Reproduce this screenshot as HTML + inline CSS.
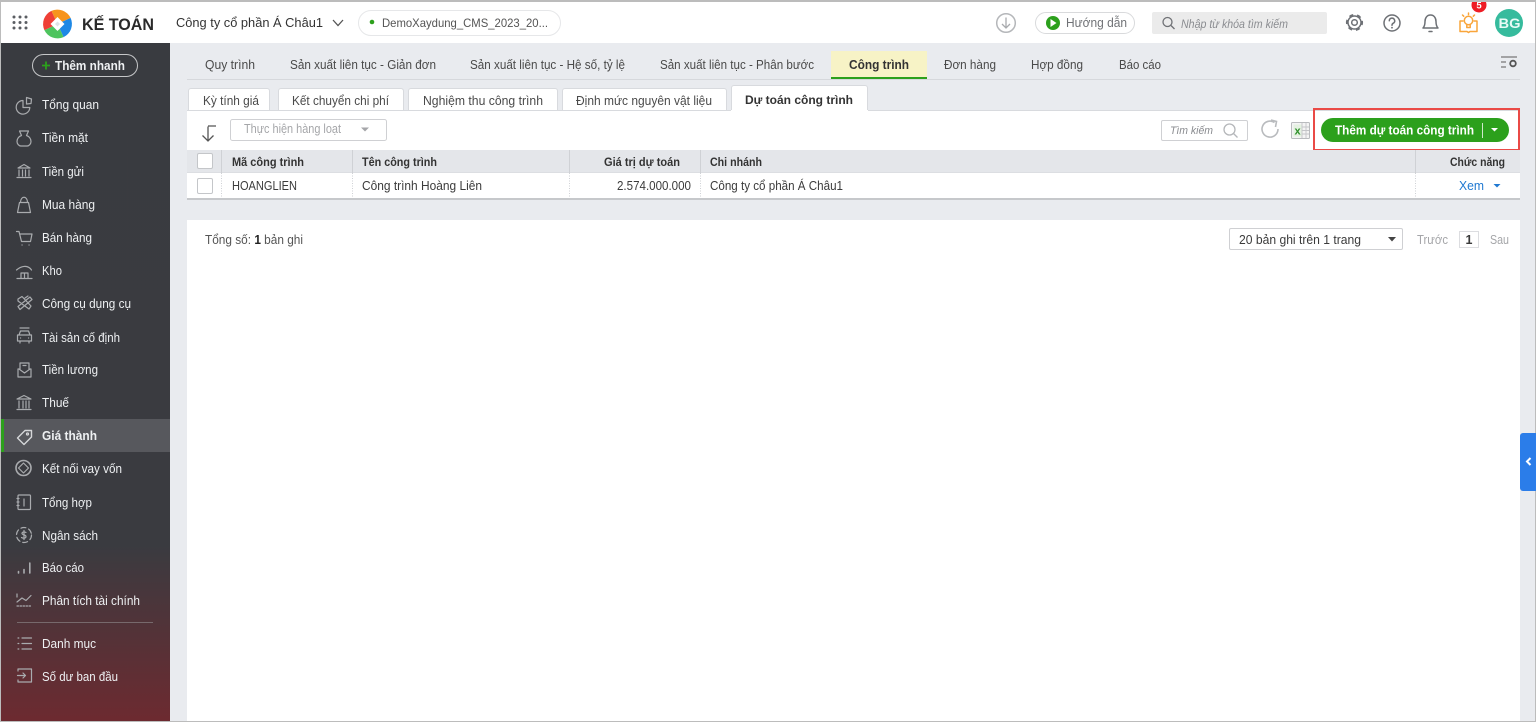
<!DOCTYPE html>
<html lang="vi"><head><meta charset="utf-8"><title>Kế toán</title>
<style>
html,body{margin:0;padding:0;width:1536px;height:722px;overflow:hidden;background:#e9ebef}
svg{display:block;font-family:"Liberation Sans","DejaVu Sans",sans-serif;filter:blur(.35px)}
text{font-size:12.5px;fill:#3b3b3b}
.s text{fill:#eef0f2;font-size:12.5px}
.b{font-weight:700}
.t text{fill:#4a4a4a}
.i{fill:none;stroke:#a9abae;stroke-width:1.2;stroke-linecap:round;stroke-linejoin:round}
.g{fill:none;stroke:#6d7075;stroke-width:1.5;stroke-linecap:round;stroke-linejoin:round}
</style></head><body>
<svg xmlns="http://www.w3.org/2000/svg" width="1536" height="722" viewBox="0 0 1536 722">
<defs><linearGradient id="sb" x1="0" y1="0" x2="0" y2="1"><stop offset="0" stop-color="#393b40"/><stop offset=".74" stop-color="#3a3b40"/><stop offset="1" stop-color="#6d2a30"/></linearGradient></defs>
<rect width="1536" height="722" fill="#e9ebef"/>
<rect y="2" width="1536" height="41" fill="#fff"/>
<rect x="1" y="43" width="169" height="679" fill="url(#sb)"/>

<!-- app grid -->
<g fill="#5b5e63"><circle cx="14" cy="17" r="1.5"/><circle cx="20" cy="17" r="1.5"/><circle cx="26" cy="17" r="1.5"/><circle cx="14" cy="22.500" r="1.5"/><circle cx="20" cy="22.500" r="1.5"/><circle cx="26" cy="22.500" r="1.5"/><circle cx="14" cy="28" r="1.5"/><circle cx="20" cy="28" r="1.5"/><circle cx="26" cy="28" r="1.5"/></g>
<!-- logo -->
<path d="M57.500 24L51.400 10.900A14.500 14.500 0 0 1 70.600 17.900Z" fill="#f7941d"/>
<path d="M57.500 24L70.600 17.900A14.500 14.500 0 0 1 63.600 37.100Z" fill="#1e88e5"/>
<path d="M57.500 24L63.600 37.100A14.500 14.500 0 0 1 44.400 30.100Z" fill="#4ec45e"/>
<path d="M57.500 24L44.400 30.100A14.500 14.500 0 0 1 51.400 10.900Z" fill="#ef3f36"/>
<path d="M57.500 17L64.500 24L57.500 31L50.500 24Z" fill="#fff"/>
<path d="M57.500 21.500L60 24L57.500 26.500L55 24Z" fill="#dfe3e6"/>
<text x="82" y="30" textLength="72" lengthAdjust="spacingAndGlyphs" class="b" style="font-size:17px;fill:#2a2a2a">KẾ TOÁN</text>
<text x="176" y="27" textLength="147" lengthAdjust="spacingAndGlyphs" style="font-size:13px;fill:#333">Công ty cổ phần Á Châu1</text>
<path d="M333 20l5 5.500 5-5.500" fill="none" stroke="#555" stroke-width="1.300"/>
<rect x="358.500" y="10.500" width="202" height="25" rx="12.500" fill="#fff" stroke="#e6e7e9"/>
<circle cx="372" cy="22" r="2.300" fill="#2ca01c"/>
<text x="382" y="27" textLength="166" lengthAdjust="spacingAndGlyphs" style="font-size:12px;fill:#555">DemoXaydung_CMS_2023_20...</text>

<!-- right header -->
<circle cx="1006" cy="23" r="9.300" fill="none" stroke="#b5b7ba" stroke-width="1.500"/>
<path d="M1006 17.500v10M1002 24l4 4 4-4" fill="none" stroke="#a9abae" stroke-width="1.300"/>
<rect x="1035.500" y="12.500" width="99" height="21" rx="10.500" fill="#fff" stroke="#d9dadc"/>
<circle cx="1053" cy="23" r="7" fill="#2ca01c"/><path d="M1050.500 19v8l6-4z" fill="#fff"/>
<text x="1066" y="27" textLength="61" lengthAdjust="spacingAndGlyphs" style="fill:#707276;font-size:12.500px">Hướng dẫn</text>
<rect x="1152" y="12" width="175" height="22" rx="2" fill="#ebebeb"/>
<circle cx="1167.500" cy="22" r="4.500" fill="none" stroke="#6f7175" stroke-width="1.300"/><path d="M1171 25.500l3.500 3.500" stroke="#6f7175" stroke-width="1.300"/>
<text x="1181" y="28" textLength="107" lengthAdjust="spacingAndGlyphs" style="font-size:11.500px;font-style:italic;fill:#8a8c90">Nhập từ khóa tìm kiếm</text>
<circle cx="1354.500" cy="22.500" r="6.500" fill="none" stroke="#6d7075" stroke-width="1.500"/>
<circle cx="1354.500" cy="22.500" r="7.800" fill="none" stroke="#6d7075" stroke-width="1.600" stroke-dasharray="4.200 3.970" transform="rotate(-12 1354.500 22.500)"/>
<circle cx="1354.500" cy="22.500" r="2.800" class="g"/>
<circle cx="1392" cy="23" r="8" class="g"/>
<path class="g" d="M1389.300 20.800a2.700 2.700 0 1 1 4 2.400c-.9.500-1.300 1-1.300 2"/><circle cx="1392" cy="27.700" r=".9" fill="#6d7075"/>
<path class="g" d="M1423 28c1.500-1.500 2-3 2-6.500 0-3.500 2-6.500 5.500-6.500s5.500 3 5.500 6.500c0 3.500.5 5 2 6.500z"/><path class="g" d="M1429 31.500h3"/>
<g fill="none" stroke="#f9a53a" stroke-width="1.500" stroke-linejoin="round" stroke-linecap="round">
<path d="M1460 21h3M1477 21h-3M1460 21v10.500h7l1.500 1 1.500-1h7V21"/>
<circle cx="1468.500" cy="20.500" r="4.200"/><path d="M1466.800 24.500v3h3.400v-3"/>
<path d="M1468.500 13v1.500M1462.500 15l1.200 1.200M1474.500 15l-1.200 1.200"/></g>
<circle cx="1479" cy="5" r="7.500" fill="#ee1c25"/>
<text x="1479" y="8.500" text-anchor="middle" class="b" style="font-size:9.500px;fill:#fff">5</text>
<circle cx="1509" cy="23" r="14" fill="#36bb9d"/>
<text x="1498.500" y="28" textLength="22" lengthAdjust="spacingAndGlyphs" class="b" style="font-size:13.500px;fill:#e9fbf6">BG</text>

<!-- sidebar -->
<rect x="32.500" y="54.500" width="105" height="22" rx="11" fill="none" stroke="#c6c7c9"/>
<path d="M42 65.500h8M46 61.500v8" stroke="#2ca01c" stroke-width="1.800"/>
<rect x="1" y="419" width="169" height="33" fill="#57585d"/><rect x="1" y="419" width="3" height="33" fill="#2ca01c"/>
<rect x="17" y="622" width="136" height="1" fill="#77696c"/>
<g class="s">
<text x="55" y="70" textLength="70" lengthAdjust="spacingAndGlyphs" style="font-weight:700;font-size:12.500px">Thêm nhanh</text>
<text x="42" y="109" textLength="57" lengthAdjust="spacingAndGlyphs">Tổng quan</text>
<text x="42" y="142" textLength="46" lengthAdjust="spacingAndGlyphs">Tiền mặt</text>
<text x="42" y="176" textLength="42" lengthAdjust="spacingAndGlyphs">Tiền gửi</text>
<text x="42" y="209" textLength="53" lengthAdjust="spacingAndGlyphs">Mua hàng</text>
<text x="42" y="242" textLength="50" lengthAdjust="spacingAndGlyphs">Bán hàng</text>
<text x="42" y="275" textLength="20" lengthAdjust="spacingAndGlyphs">Kho</text>
<text x="42" y="308" textLength="89" lengthAdjust="spacingAndGlyphs">Công cụ dụng cụ</text>
<text x="42" y="342" textLength="78" lengthAdjust="spacingAndGlyphs">Tài sản cố định</text>
<text x="42" y="374" textLength="56" lengthAdjust="spacingAndGlyphs">Tiền lương</text>
<text x="42" y="407" textLength="27" lengthAdjust="spacingAndGlyphs">Thuế</text>
<text x="42" y="440" textLength="55" lengthAdjust="spacingAndGlyphs" class="b">Giá thành</text>
<text x="42" y="473" textLength="80" lengthAdjust="spacingAndGlyphs">Kết nối vay vốn</text>
<text x="42" y="507" textLength="50" lengthAdjust="spacingAndGlyphs">Tổng hợp</text>
<text x="42" y="540" textLength="56" lengthAdjust="spacingAndGlyphs">Ngân sách</text>
<text x="42" y="572" textLength="42" lengthAdjust="spacingAndGlyphs">Báo cáo</text>
<text x="42" y="605" textLength="98" lengthAdjust="spacingAndGlyphs">Phân tích tài chính</text>
<text x="42" y="648" textLength="54" lengthAdjust="spacingAndGlyphs">Danh mục</text>
<text x="42" y="681" textLength="76" lengthAdjust="spacingAndGlyphs">Số dư ban đầu</text>
</g>
<!-- sidebar icons -->
<g class="i">
<path d="M23 100.500a6.800 6.800 0 1 0 6.800 7h-6.800z"/><path d="M26.500 97.500l5 1.500-.5 4.500-4.500.5z"/>
<path d="M19.500 131h9l-2 4.500c3 1 4.500 3.500 4.500 6 0 2.500-2 4.500-4 4.500h-6c-2 0-4-2-4-4.500 0-2.500 1.500-5 4.500-6z"/>
<path d="M24 164.500l-6 3.500h12zM19 170v6M22.500 170v6M25.500 170v6M29 170v6M17 177.500h14"/>
<path d="M17.500 212.500l2-10h9l2 10zM20.500 202.500c0-7 7-7 7 0"/>
<path d="M16.500 231.500h2.500l2.500 10h9l1.500-7.500H20M22 245h.1M29 245h.1"/>
<path d="M16.500 270c4-3.500 11-6 15 0M17 278.500h15M21 278v-5h7v5M24.500 273v5"/>
<path d="M18 299l4-2.500 9 9.500-2 3-11-8zM30 297l2 2.500-12 10-2-3zM25 298l3-2"/>
<path d="M20 328h9M19 335l1.500-4h8l1.500 4M17.500 335h14v6h-14zM20 341v2M29 341v2M20.500 338h.1M28.500 338h.1"/>
<path d="M20 369v-6h9v6M18 369h1l5.500 4 5.500-4h1v8H18zM23 365.500h3"/>
<path d="M24 395.500l-7 3.500h14zM19 401v7M23 401v7M26 401v7M29 401v7M17 409.500h14"/>
<path d="M17.500 438l7.500-7.500h6.500v6.500l-7.500 7.500z" stroke-width="1.400" stroke="#d6d7d9"/><circle cx="27.500" cy="434" r="1" stroke="#d6d7d9"/>
<circle cx="23.500" cy="468" r="7.500" stroke-width="1.600"/><path d="M23.500 463l5 5-5 5-5-5z"/>
<rect x="18" y="495" width="12.500" height="14.500" rx="1"/><path d="M17 498.500h2M17 502h2M17 505.500h2M24 499v7"/>
<circle cx="24" cy="535" r="7.500" stroke-dasharray="5 3"/><path d="M26 532.500c-2-1-4-.5-4 1s4 1 4 3-3 2-4.500 1M24 530.500v9"/>
<path d="M18.500 573v-1.500M24 573v-3.500M29.800 573v-10" stroke-width="1.600"/>
<path d="M17 606h15" stroke-dasharray="1.500 1.500"/><path d="M17 602l5-4 4 2.500 5-5M17 594v3"/>
<path d="M18 638h.8M18 643.500h.8M18 649h.8M22 638h9.500M22 643.500h9.500M22 649h9.500"/>
<path d="M18 671v-2h13.500v13H18v-2M17.500 675.500h8M23 673l2.500 2.500-2.500 2.500"/>
</g>

<!-- first-level tabs -->
<rect x="831" y="51" width="96" height="28" fill="#f7f3c6"/><rect x="831" y="77" width="96" height="2" fill="#2ca01c"/>
<rect x="187" y="79" width="1333" height="1" fill="#d6d8dc"/>
<g class="t">
<text x="205" y="69" textLength="50" lengthAdjust="spacingAndGlyphs">Quy trình</text>
<text x="290" y="69" textLength="146" lengthAdjust="spacingAndGlyphs">Sản xuất liên tục - Giản đơn</text>
<text x="470" y="69" textLength="155" lengthAdjust="spacingAndGlyphs">Sản xuất liên tục - Hệ số, tỷ lệ</text>
<text x="660" y="69" textLength="154" lengthAdjust="spacingAndGlyphs">Sản xuất liên tục - Phân bước</text>
<text x="849" y="69" textLength="60" lengthAdjust="spacingAndGlyphs" class="b" style="fill:#333">Công trình</text>
<text x="944" y="69" textLength="52" lengthAdjust="spacingAndGlyphs">Đơn hàng</text>
<text x="1031" y="69" textLength="52" lengthAdjust="spacingAndGlyphs">Hợp đồng</text>
<text x="1119" y="69" textLength="42" lengthAdjust="spacingAndGlyphs">Báo cáo</text>
</g>
<path d="M1501 57h16M1501 62h5M1501 67h5" stroke="#777" stroke-width="1.200" fill="none"/>
<circle cx="1513" cy="63.500" r="2.800" fill="none" stroke="#555" stroke-width="1.800"/>

<!-- second-level tabs -->
<g fill="#fff" stroke="#d8dade">
<path d="M188.500 111V91a2.500 2.500 0 0 1 2.500-2.500h76a2.500 2.500 0 0 1 2.500 2.500v20z"/>
<path d="M278.500 111V91a2.500 2.500 0 0 1 2.500-2.500h120a2.500 2.500 0 0 1 2.500 2.500v20z"/>
<path d="M408.500 111V91a2.500 2.500 0 0 1 2.500-2.500h144a2.500 2.500 0 0 1 2.500 2.500v20z"/>
<path d="M562.500 111V91a2.500 2.500 0 0 1 2.500-2.500h159a2.500 2.500 0 0 1 2.500 2.500v20z"/>
<path d="M731.500 111V88a2.500 2.500 0 0 1 2.500-2.500h131a2.500 2.500 0 0 1 2.500 2.500v23z"/>
</g>
<rect x="187" y="110" width="1333" height="40" fill="#fff"/>
<rect x="187" y="110" width="544" height="1" fill="#d8dade"/><rect x="868" y="110" width="652" height="1" fill="#d8dade"/>
<g class="t">
<text x="203" y="105" textLength="56" lengthAdjust="spacingAndGlyphs">Kỳ tính giá</text>
<text x="292" y="105" textLength="97" lengthAdjust="spacingAndGlyphs">Kết chuyển chi phí</text>
<text x="423" y="105" textLength="120" lengthAdjust="spacingAndGlyphs">Nghiệm thu công trình</text>
<text x="576" y="105" textLength="136" lengthAdjust="spacingAndGlyphs">Định mức nguyên vật liệu</text>
<text x="745" y="104" textLength="108" lengthAdjust="spacingAndGlyphs" class="b" style="fill:#333;font-size:12px">Dự toán công trình</text>
</g>

<!-- toolbar -->
<path d="M208 126.500v14M202.500 135.500l5.500 5.500 5.500-5.500M208 126h8" fill="none" stroke="#555" stroke-width="1.300"/>
<rect x="230.500" y="119.500" width="156" height="21" rx="2" fill="#fff" stroke="#cfd0d3"/>
<text x="244" y="133" textLength="97" lengthAdjust="spacingAndGlyphs" style="fill:#a5a6a9">Thực hiện hàng loạt</text>
<path d="M361 127.500h8l-4 4z" fill="#a5a6a9"/>
<rect x="1161.500" y="120.500" width="86" height="20" rx="1.500" fill="#fff" stroke="#cfd0d3"/>
<text x="1170" y="134" textLength="43" lengthAdjust="spacingAndGlyphs" style="font-size:11px;font-style:italic;fill:#8a8c90">Tìm kiếm</text>
<circle cx="1229.500" cy="129.500" r="5.500" fill="none" stroke="#b5b7ba" stroke-width="1.300"/><path d="M1233.500 133.500l4 4" stroke="#b5b7ba" stroke-width="1.300"/>
<path d="M1274.500 122.500a8 8 0 1 0 3.500 6.500" fill="none" stroke="#b9bbbe" stroke-width="1.600"/><path d="M1271 120l5.500 1.500-1 5.500" fill="none" stroke="#b9bbbe" stroke-width="1.600"/>
<rect x="1291.500" y="122.500" width="18" height="16" rx="1" fill="#f4f4f4" stroke="#b9bbbe"/>
<path d="M1302 123v15M1306 123v15M1298 127h11M1298 130.500h11M1298 134h11" stroke="#c4c5c8" stroke-width=".9"/>
<rect x="1293.500" y="124.500" width="8" height="12" fill="#e4f1e1"/>
<text x="1297.500" y="134.500" text-anchor="middle" class="b" style="font-size:11px;fill:#2f8f2a">x</text>
<rect x="1321" y="118" width="188" height="24" rx="12" fill="#2ca01c"/>
<text x="1335" y="134.500" textLength="139" lengthAdjust="spacingAndGlyphs" class="b" style="fill:#fff;font-size:12.500px">Thêm dự toán công trình</text>
<rect x="1482" y="123" width="1" height="15" fill="#cfe9cb"/>
<path d="M1491 128h7l-3.500 3.500z" fill="#fff"/>
<rect x="1314" y="109" width="205" height="41" fill="none" stroke="#ea4a46" stroke-width="2"/>

<!-- table -->
<rect x="187" y="150" width="1333" height="23" fill="#e4e6ea"/>
<rect x="187" y="172.500" width="1333" height="1" fill="#d5d7db"/>
<rect x="187" y="173" width="1333" height="25" fill="#fff"/>
<rect x="187" y="198" width="1333" height="2" fill="#c6c8cb"/>
<g stroke="#cfd1d5" fill="none"><path d="M221.500 150v23M352.500 150v23M569.500 150v23M700.500 150v23M1415.500 150v23"/>
<path stroke-dasharray="1 1.500" d="M221.500 173v25M352.500 173v25M569.500 173v25M700.500 173v25M1415.500 173v25"/></g>
<rect x="197.500" y="153.500" width="15" height="15" rx="1.500" fill="#fff" stroke="#c4c6c9"/>
<rect x="197.500" y="178.500" width="15" height="15" rx="1.500" fill="#fff" stroke="#c4c6c9"/>
<g style="font-weight:700">
<text x="232" y="166" textLength="72" lengthAdjust="spacingAndGlyphs" style="font-size:12px;fill:#333">Mã công trình</text>
<text x="362" y="166" textLength="75" lengthAdjust="spacingAndGlyphs" style="font-size:12px;fill:#333">Tên công trình</text>
<text x="604" y="166" textLength="76" lengthAdjust="spacingAndGlyphs" style="font-size:12px;fill:#333">Giá trị dự toán</text>
<text x="710" y="166" textLength="52" lengthAdjust="spacingAndGlyphs" style="font-size:12px;fill:#333">Chi nhánh</text>
<text x="1450" y="166" textLength="55" lengthAdjust="spacingAndGlyphs" style="font-size:12px;fill:#333">Chức năng</text>
</g>
<text x="232" y="190" textLength="65" lengthAdjust="spacingAndGlyphs">HOANGLIEN</text>
<text x="362" y="190" textLength="120" lengthAdjust="spacingAndGlyphs">Công trình Hoàng Liên</text>
<text x="617" y="190" textLength="74" lengthAdjust="spacingAndGlyphs">2.574.000.000</text>
<text x="710" y="190" textLength="133" lengthAdjust="spacingAndGlyphs">Công ty cổ phần Á Châu1</text>
<text x="1459" y="190" textLength="25" lengthAdjust="spacingAndGlyphs" style="fill:#1f78d1">Xem</text>
<path d="M1493.500 184h7l-3.500 3.500z" fill="#1f78d1"/>

<!-- paging panel -->
<rect x="187" y="220" width="1333" height="502" fill="#fff"/>
<text x="205" y="244" textLength="98" lengthAdjust="spacingAndGlyphs" style="fill:#555">Tổng số: <tspan class="b" style="fill:#222">1</tspan> bản ghi</text>
<rect x="1229.500" y="228.500" width="173" height="21" rx="1.500" fill="#fff" stroke="#cfd0d3"/>
<text x="1239" y="244" textLength="122" lengthAdjust="spacingAndGlyphs">20 bản ghi trên 1 trang</text>
<path d="M1388 237h8l-4 4.500z" fill="#444"/>
<text x="1417" y="244" textLength="31" lengthAdjust="spacingAndGlyphs" style="fill:#a5a6a9">Trước</text>
<rect x="1459.500" y="231.500" width="19" height="16" fill="#fff" stroke="#dcdde0"/>
<text x="1469" y="244" text-anchor="middle" class="b">1</text>
<text x="1490" y="244" textLength="19" lengthAdjust="spacingAndGlyphs" style="fill:#a5a6a9">Sau</text>

<!-- side toggle -->
<path d="M1536 433h-13a3 3 0 0 0-3 3v52a3 3 0 0 0 3 3h13z" fill="#2b7de9"/>
<path d="M1530.500 458l-3.500 3.500 3.500 3.500" fill="none" stroke="#fff" stroke-width="2"/>

<!-- screenshot frame -->
<rect width="1536" height="2" fill="#bcbcbc"/>
<rect y="0" width="1" height="722" fill="#bcbcbc"/>
<rect x="1535" y="0" width="1" height="433" fill="#bcbcbc"/><rect x="1535" y="491" width="1" height="231" fill="#bcbcbc"/>
<rect y="721" width="1536" height="1" fill="#bcbcbc"/>
</svg>
</body></html>
